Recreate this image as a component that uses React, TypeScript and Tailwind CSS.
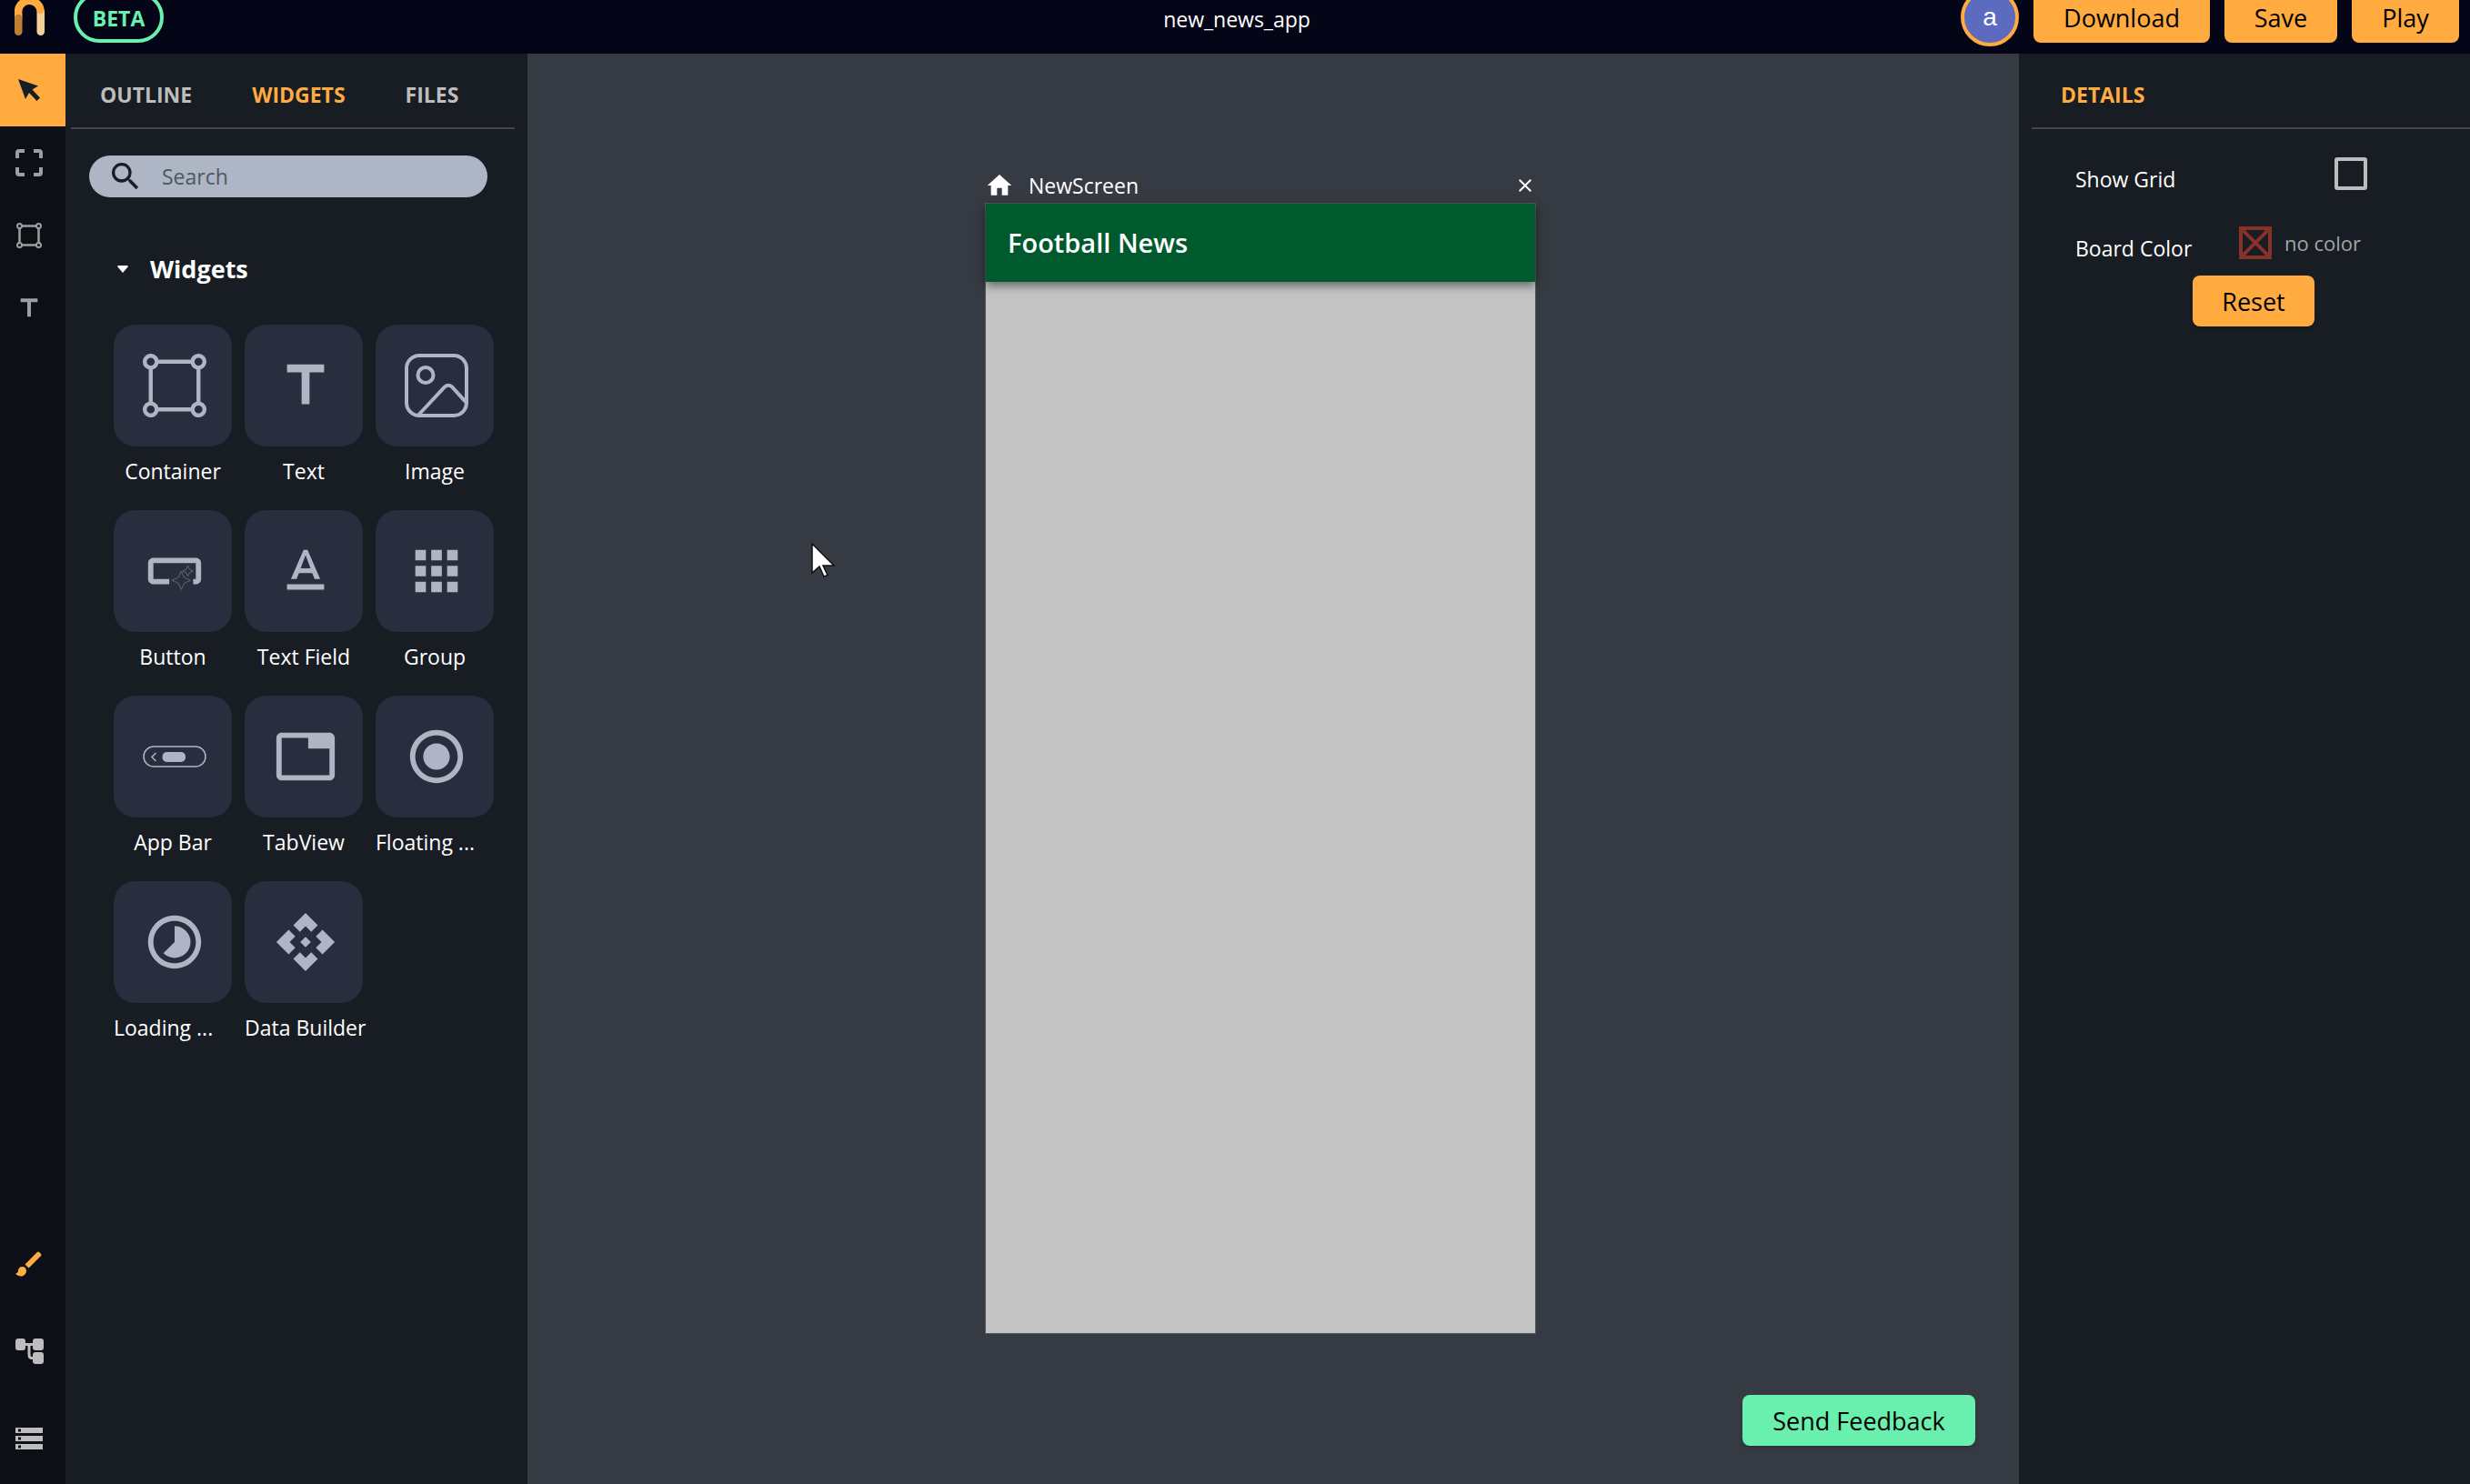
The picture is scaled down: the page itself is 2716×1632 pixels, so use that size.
import React from "react";
import {
  MdSearch, MdTitle, MdTextFormat, MdApps, MdTab, MdRadioButtonChecked,
  MdTimelapse, MdApi, MdHome, MdClose, MdStorage, MdBrush,
} from "react-icons/md";
import { BsBoundingBoxCircles } from "react-icons/bs";

const ImageIcon = () => (
  <svg viewBox="0 0 70 70" className="size-[70px]" fill="none" stroke="currentColor" strokeWidth="4">
    <rect x="2" y="2" width="66" height="66" rx="14" />
    <circle cx="23" cy="23.500" r="8.500" />
    <path d="M15.500 67 L44 36.500 Q48 33 52 36.500 L68 54" />
  </svg>
);

const ButtonIcon = () => (
  <svg viewBox="0 0 24 24" className="size-[70px]" fill="currentColor">
    <path d="M22 9v6c0 1.1-.9 2-2 2h-1v-2h1V9H4v6h6v2H4c-1.100 0-2-.9-2-2V9c0-1.100.9-2 2-2h16c1.100 0 2 .9 2 2z" />
    <path
      fill="none" stroke="#66717c" strokeWidth=".3"
      d="M14.500 19l1.090-2.410L18 15.500l-2.410-1.090L14.500 12l-1.090 2.410L11 15.500l2.410 1.090zM17 14l.62-1.380L19 12l-1.380-.62L17 10l-.62 1.380L15 12l1.380.62z"
    />
  </svg>
);

const AppBarIcon = () => (
  <svg viewBox="0 0 70 24" className="w-[70px]" fill="none" stroke="currentColor">
    <rect x="1" y="1" width="68" height="22" rx="11" strokeWidth="1.500" />
    <path d="M14.500 8 L10 12.500 L14.500 17" strokeWidth="1.500" />
    <rect x="21.500" y="7" width="25.500" height="11" rx="5" fill="currentColor" stroke="none" />
  </svg>
);

const Pointer = () => (
  <svg viewBox="0 0 24 24" className="size-6" fill="currentColor">
    <path d="M0 0 L22 7.500 L15.500 11.500 L24 20.500 L20.500 24 L12 15 L8 22 Z" />
  </svg>
);

const FrameIcon = () => (
  <svg viewBox="0 0 30 30" className="size-[30px]" fill="none" stroke="currentColor" strokeWidth="4">
    <path d="M2 10 V4 Q2 2 4 2 H10 M20 2 H26 Q28 2 28 4 V10 M28 20 V26 Q28 28 26 28 H20 M10 28 H4 Q2 28 2 26 V20" />
  </svg>
);

const BoxIcon = () => (
  <svg viewBox="0 0 28 28" className="size-7" fill="none" stroke="currentColor" strokeWidth="2">
    <path d="M6 3.500 H22 M6 24.500 H22 M3.500 6 V22 M24.500 6 V22" strokeWidth="2.500" />
    <circle cx="3.500" cy="3.500" r="2.500" />
    <circle cx="24.500" cy="3.500" r="2.500" />
    <circle cx="3.500" cy="24.500" r="2.500" />
    <circle cx="24.500" cy="24.500" r="2.500" />
  </svg>
);

const Logo = () => (
  <svg viewBox="0 0 33 42" className="w-[33px] shrink-0" fill="none" strokeWidth="8.500" strokeLinecap="round">
    <path d="M28.750 15 V36.750" stroke="#f7cf98" />
    <path d="M4.250 21 V17 A12.250 12.250 0 0 1 28.500 13" stroke="#ffab40" />
    <path d="M4.250 22 V36.750" stroke="#bd7f31" />
  </svg>
);

const TreeIcon = () => (
  <svg viewBox="0 0 31 28" className="w-[31px]" fill="currentColor">
    <rect width="11" height="13" rx="3" />
    <rect x="19" width="12" height="13" rx="3" />
    <rect x="19" y="15" width="12" height="13" rx="3" />
    <path d="M10 6.500 H20 M15 6.500 V18 Q15 21.500 18 21.500 H20" fill="none" stroke="currentColor" strokeWidth="3" />
  </svg>
);

const tiles = [
  { label: "Container", icon: <BsBoundingBoxCircles className="size-[70px]" /> },
  { label: "Text", icon: <MdTitle className="size-[70px]" /> },
  { label: "Image", icon: <ImageIcon /> },
  { label: "Button", icon: <ButtonIcon /> },
  { label: "Text Field", icon: <MdTextFormat className="size-[70px]" /> },
  { label: "Group", icon: <MdApps className="size-[70px]" /> },
  { label: "App Bar", icon: <AppBarIcon /> },
  { label: "TabView", icon: <MdTab className="size-[70px]" /> },
  { label: "Floating ...", icon: <MdRadioButtonChecked className="size-[70px]" />, cut: true },
  { label: "Loading ...", icon: <MdTimelapse className="size-[70px]" />, cut: true },
  { label: "Data Builder", icon: <MdApi className="size-[70px]" /> },
];

const solidButton = "h-14 shrink-0 rounded-lg pt-[2px] text-[27px] font-medium text-black";

export default function App() {
  return (
    <div className="flex h-screen flex-col overflow-hidden bg-[#181c23] font-['Open_Sans',sans-serif] text-[23px] leading-8 text-white">
      <header className="grid h-[59px] shrink-0 grid-cols-[1fr_auto_1fr] grid-rows-[38px] items-center overflow-hidden bg-[#040516] pl-4 pr-3">
        <div className="flex items-center gap-8">
          <Logo />
          <span className="flex h-14 w-[99px] items-center justify-center rounded-full border-4 border-[#69f0ae] pt-[2px] font-bold text-[#69f0ae]">BETA</span>
        </div>
        <h1 className="pt-1">new_news_app</h1>
        <div className="flex items-center justify-end gap-4">
          <button aria-label="Account" className="size-16 shrink-0 rounded-full border-4 border-[#ffab40] bg-[#5c6bc0] font-['Liberation_Sans',sans-serif] text-[28px]">a</button>
          <button className={`${solidButton} w-[194px] bg-[#ffab40]`}>Download</button>
          <button className={`${solidButton} w-[124px] bg-[#ffab40]`}>Save</button>
          <button className={`${solidButton} w-[118px] bg-[#ffab40]`}>Play</button>
        </div>
      </header>

      <div className="flex min-h-0 flex-1">
        <nav className="flex w-[72px] shrink-0 flex-col bg-[#0c0f16] text-[#9e9e9e]">
          <button aria-label="Select" className="flex h-20 items-center justify-center bg-[#ffab40] pr-2 text-[#181c23]"><Pointer /></button>
          <button aria-label="Frame" className="flex h-20 items-center justify-center pr-2"><FrameIcon /></button>
          <button aria-label="Container" className="flex h-20 items-center justify-center pr-2"><BoxIcon /></button>
          <button aria-label="Text" className="flex h-20 items-center justify-center pr-2"><MdTitle className="size-8" /></button>
          <div className="mt-auto flex flex-col pb-[2px] text-[#bdbdbd]">
            <button aria-label="Design" className="flex h-24 items-center justify-center pr-2 text-[#ffab40]"><MdBrush className="size-9" /></button>
            <button aria-label="Flow" className="flex h-24 items-center justify-center pr-2"><TreeIcon /></button>
            <button aria-label="Data" className="flex h-24 items-center justify-center pr-2"><MdStorage className="size-9" /></button>
          </div>
        </nav>

        <aside className="w-[508px] shrink-0">
          <div className="ml-[6px] mr-[14px] flex h-[83px] items-center gap-[66px] border-b-2 border-[#424549] pl-8 pt-2 font-bold text-[#bdbdbd]">
            <button>OUTLINE</button>
            <button className="text-[#ffab40]">WIDGETS</button>
            <button>FILES</button>
          </div>
          <label className="ml-[26px] mr-11 mt-[29px] flex h-[46px] items-center rounded-full bg-[#aeb5c4] pl-5 text-[#181c23]">
            <MdSearch className="size-10" />
            <input type="search" placeholder="Search" aria-label="Search" className="ml-5 min-w-0 flex-1 bg-transparent outline-none placeholder:text-[#4b5a60]" />
          </label>
          <button className="ml-[57px] mt-[59px] flex items-center gap-6 text-[27px] font-bold leading-10">
            <svg viewBox="0 0 12 8" className="w-3" fill="currentColor"><path d="M0 1 Q0 0 2 0 H10 Q12 0 12 1 L6 8 Z" /></svg>
            Widgets
          </button>
          <div className="ml-[53px] mt-[41px] grid w-[418px] grid-cols-3 gap-x-[14px] gap-y-[27px]">
            {tiles.map((t) => (
              <button key={t.label} className="flex flex-col gap-[11px]">
                <span className="flex h-[134px] w-full items-center justify-center rounded-[24px] bg-[#282e3d] pl-1 text-[#aeb5c4]">{t.icon}</span>
                <span className={t.cut ? "w-full whitespace-nowrap text-left" : "w-full whitespace-nowrap text-center"}>{t.label}</span>
              </button>
            ))}
          </div>
        </aside>

        <main className="relative flex flex-1 flex-col items-center bg-[#363a42] pb-[165px] pr-7 pt-[126px]">
          <section className="flex w-[606px] flex-1 flex-col">
            <div className="flex h-[38px] items-center">
              <MdHome className="size-8" />
              <span className="ml-4 flex-1">NewScreen</span>
              <button aria-label="Close screen"><MdClose className="size-6" /></button>
            </div>
            <div className="flex-1 border border-[#55595f] bg-[#c4c4c4]">
              <div className="flex h-[86px] items-center bg-[#005a2e] pl-6 text-[29px] font-semibold shadow-[0_4px_10px_rgba(0,0,0,0.5)]">Football News</div>
            </div>
          </section>
          <button className={`${solidButton} absolute bottom-[42px] right-12 w-64 bg-[#69f0ae] shadow-md`}>Send Feedback</button>
          <svg viewBox="0 0 26 40" className="absolute left-[312px] top-[538px] w-[26px]" fill="#fff" stroke="#111" strokeWidth="1.500">
            <path d="M1 1 V33 L9 26 L14 37 L18 35.500 L13 25 L25 25 Z" />
          </svg>
        </main>

        <aside className="w-[496px] shrink-0 pl-[14px]">
          <div className="flex h-[83px] items-center border-b-2 border-[#424549] pl-8 pt-2">
            <h2 className="font-bold text-[#ffab40]">DETAILS</h2>
          </div>
          <div className="mt-[31px] flex h-9 items-center pl-12">
            <label htmlFor="grid" className="w-[285px] pt-3">Show Grid</label>
            <input id="grid" type="checkbox" className="size-9 appearance-none rounded-[3px] border-4 border-[#bdbdbd]" />
          </div>
          <div className="mt-10 flex h-9 items-center pl-12">
            <span className="w-[180px] pt-3">Board Color</span>
            <button className="flex items-center gap-[14px] text-[22px] text-[#a3a5a8]">
              <svg viewBox="0 0 36 36" className="size-9" fill="none" stroke="#87302a" strokeWidth="4"><rect x="2" y="2" width="32" height="32" /><path d="M3 3 L33 33 M33 3 L3 33" /></svg>
              no color
            </button>
          </div>
          <button className={`${solidButton} ml-[177px] mt-[18px] w-[134px] bg-[#ffab40] shadow-md`}>Reset</button>
        </aside>
      </div>
    </div>
  );
}
